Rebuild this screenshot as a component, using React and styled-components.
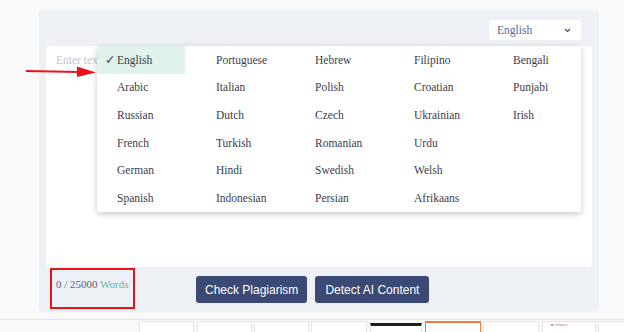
import React from "react";
import styled, { createGlobalStyle } from "styled-components";

const languages = [
  ["English", "Portuguese", "Hebrew", "Filipino", "Bengali"],
  ["Arabic", "Italian", "Polish", "Croatian", "Punjabi"],
  ["Russian", "Dutch", "Czech", "Ukrainian", "Irish"],
  ["French", "Turkish", "Romanian", "Urdu", ""],
  ["German", "Hindi", "Swedish", "Welsh", ""],
  ["Spanish", "Indonesian", "Persian", "Afrikaans", ""],
];

const thumbs = [
  { x: 139, w: 55 },
  { x: 197, w: 55 },
  { x: 254, w: 55 },
  { x: 311, w: 56 },
  { x: 370, w: 52, kind: "dark" },
  { x: 425, w: 56, kind: "orange" },
  { x: 483, w: 56 },
  { x: 542, w: 54, kind: "label" },
  { x: 598, w: 40 },
];

const GlobalStyle = createGlobalStyle`
  html, body {
    margin: 0;
    padding: 0;
    background: #f9f9f9;
  }
  body {
    font-family: "Liberation Serif", "Times New Roman", serif;
    overflow: hidden;
  }
`;

const Page = styled.div`
  width: 624px;
  height: 332px;
  display: flex;
  flex-direction: column;
  overflow: hidden;
`;

const Card = styled.section`
  position: relative;
  margin: 10px 0 0 39px;
  width: 560px;
  height: 303px;
  box-sizing: border-box;
  padding: 10px 7px 0;
  background: #edf1f5;
  border-radius: 4px;
  display: flex;
  flex-direction: column;
`;

const Toolbar = styled.div`
  display: flex;
  justify-content: flex-end;
  padding-right: 11px;
  margin-bottom: 6px;
`;

const Select = styled.div`
  width: 92px;
  height: 20px;
  box-sizing: border-box;
  background: #fff;
  border-radius: 3px;
  display: flex;
  align-items: center;
  justify-content: space-between;
  padding: 0 10px 0 8px;
  font-size: 11.5px;
  color: #52689a;
`;

const Editor = styled.div`
  position: relative;
  height: 221px;
  background: #fff;
  border-radius: 3px;
`;

const TextInput = styled.textarea`
  width: 100%;
  height: 100%;
  box-sizing: border-box;
  border: none;
  outline: none;
  resize: none;
  background: transparent;
  padding: 8px 10px;
  font-family: "Liberation Serif", "Times New Roman", serif;
  font-size: 11.5px;
  &::placeholder {
    color: #c4c4c4;
  }
`;

const Menu = styled.div`
  position: absolute;
  top: 0;
  right: 11px;
  width: 484px;
  background: #fff;
  border-radius: 3px;
  box-shadow: 0 2px 6px rgba(0, 0, 0, 0.22);
  display: grid;
  grid-template-columns: repeat(5, 88px);
  grid-auto-rows: 27.67px;
  column-gap: 11px;
`;

const Option = styled.div`
  position: relative;
  display: flex;
  align-items: center;
  padding-left: 20px;
  font-size: 11.5px;
  color: #3c3c4c;
  background: ${(p) => (p.$active ? "#e0f2ec" : "transparent")};
`;

const Check = styled.span`
  position: absolute;
  left: 8px;
  font-family: "DejaVu Sans", sans-serif;
  font-size: 12.5px;
`;

const Footer = styled.div`
  display: flex;
  align-items: flex-start;
  padding-left: 4px;
`;

const Counter = styled.div`
  margin-top: 1px;
  width: 85px;
  height: 41px;
  box-sizing: border-box;
  border: 2.5px solid #e8141a;
  padding: 8px 0 0 4px;
  font-size: 11px;
  color: #5d6170;
`;

const Words = styled.span`
  color: #5fb3a7;
`;

const Buttons = styled.div`
  display: flex;
  gap: 8px;
  margin: 9px 0 0 61px;
`;

const Button = styled.button`
  height: 27px;
  padding: 0 ${(p) => p.$pad}px;
  border: none;
  border-radius: 3px;
  background: #3b4a75;
  color: #fff;
  font-family: "Liberation Sans", Arial, sans-serif;
  font-size: 12px;
`;

const Arrow = styled.svg`
  position: absolute;
  left: -14px;
  top: 46px;
`;

const Strip = styled.div`
  position: relative;
  margin-top: 7px;
  height: 12px;
  border-top: 1px solid #e3e3e3;
`;

const Thumb = styled.div`
  position: absolute;
  top: 1px;
  height: 12px;
  box-sizing: border-box;
  background: #fff;
  border: 1px solid ${(p) => (p.$kind === "orange" ? "#f07a3a" : "#e4e4e4")};
  border-top: ${(p) =>
    p.$kind === "dark"
      ? "3px solid #1e1e1e"
      : p.$kind === "orange"
      ? "2px solid #f07a3a"
      : "1px solid #e4e4e4"};
  margin-top: ${(p) => (p.$kind === "dark" ? "2px" : "0")};
  font-family: "Liberation Sans", Arial, sans-serif;
  font-size: 4px;
  color: #c77a9a;
  padding-left: 8px;
`;

export default function App() {
  return (
    <Page>
      <GlobalStyle />
      <Card>
        <Toolbar>
          <Select>
            <span>English</span>
            <svg width="7" height="5" viewBox="0 0 7 5">
              <path d="M1 1 L3.5 3.5 L6 1" fill="none" stroke="#4a4f66" strokeWidth="1.2" />
            </svg>
          </Select>
        </Toolbar>
        <Editor>
          <TextInput placeholder="Enter text here..." />
          <Menu>
            {languages.flat().map((lang, i) => (
              <Option key={i} $active={i === 0}>
                {i === 0 && <Check>✓</Check>}
                {lang}
              </Option>
            ))}
          </Menu>
        </Editor>
        <Footer>
          <Counter>
            0 / 25000 <Words>Words</Words>
          </Counter>
          <Buttons>
            <Button $pad={9}>Check Plagiarism</Button>
            <Button $pad={10}>Detect AI Content</Button>
          </Buttons>
        </Footer>
        <Arrow width="72" height="22" viewBox="0 0 72 22">
          <path d="M1 15 L54 16" stroke="#e8141a" strokeWidth="2" fill="none" />
          <path d="M52 10.5 L71 16.5 L52 21 Z" fill="#e8141a" />
        </Arrow>
      </Card>
      <Strip>
        {thumbs.map((t, i) => (
          <Thumb key={i} $kind={t.kind} style={{ left: t.x, width: t.w }}>
            {t.kind === "label" ? "■ shopee" : ""}
          </Thumb>
        ))}
      </Strip>
    </Page>
  );
}
